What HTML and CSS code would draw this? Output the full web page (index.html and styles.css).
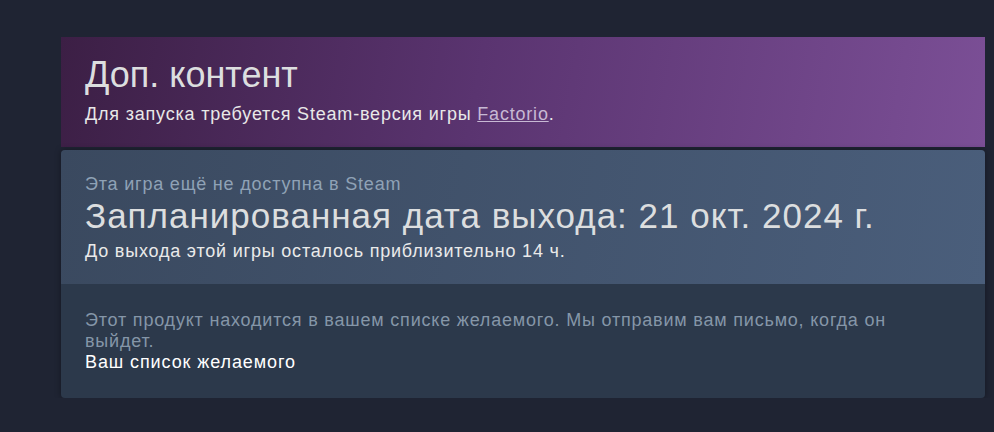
FILE: index.html
```html
<!DOCTYPE html>
<html>
<head>
  <meta charset="utf-8">
  <title>Доп. контент</title>
  <link rel="stylesheet" href="styles.css">
</head>
<body>
  <div class="page">
    <section class="dlc-banner">
      <h1>Доп. контент</h1>
      <p>Для запуска требуется Steam-версия игры <a href="#">Factorio</a>.</p>
    </section>

    <section class="release-box">
      <div class="release-info">
        <div class="not-available">Эта игра ещё не доступна в Steam</div>
        <h2>Запланированная дата выхода: 21 окт. 2024 г.</h2>
        <div class="countdown">До выхода этой игры осталось приблизительно 14 ч.</div>
      </div>
      <div class="wishlist-info">
        <p>Этот продукт находится в вашем списке желаемого. Мы отправим вам письмо, когда он выйдет.</p>
        <a href="#">Ваш список желаемого</a>
      </div>
    </section>
  </div>
</body>
</html>
```

FILE: styles.css
```css
body {
  margin: 0;
  padding: 0;
  background: #1f2433;
  font-family: "Liberation Sans", Arial, sans-serif;
  color: #dcdedf;
}

.page {
  padding: 37px 9px 0 61px;
}

.dlc-banner {
  height: 110px;
  box-sizing: border-box;
  padding: 18px 24px 0 24px;
  background: linear-gradient(100deg, #3c1f45 0%, #5a3470 45%, #7b4f96 100%);
}

.dlc-banner h1 {
  margin: 0;
  font-size: 36px;
  font-weight: normal;
  line-height: 40px;
  color: #dcdedf;
}

.dlc-banner p {
  margin: 8px 0 0 0;
  font-size: 18px;
  line-height: 22px;
  letter-spacing: 0.8px;
  color: #e8e8e8;
}

.dlc-banner a {
  color: #c7b9d4;
  text-decoration: underline;
}

.release-box {
  margin-top: 3px;
  border-radius: 4px;
  overflow: hidden;
  box-shadow: 0 0 6px rgba(0, 0, 0, 0.35);
}

.release-info {
  height: 134px;
  box-sizing: border-box;
  padding: 23px 24px 0 24px;
  background: linear-gradient(100deg, #3a495f 0%, #4a5e7b 100%);
}

.not-available {
  font-size: 18px;
  line-height: 22px;
  letter-spacing: 0.8px;
  color: #8fa2b6;
}

.release-info h2 {
  margin: 1px 0 0 0;
  font-size: 35px;
  font-weight: normal;
  line-height: 40px;
  letter-spacing: 1px;
  color: #dcdedf;
}

.countdown {
  margin-top: 4px;
  font-size: 18px;
  line-height: 22px;
  letter-spacing: 0.8px;
  color: #eaeaea;
}

.wishlist-info {
  height: 114px;
  box-sizing: border-box;
  padding: 26px 40px 0 24px;
  background: #2c394b;
}

.wishlist-info p {
  margin: 0;
  font-size: 18px;
  line-height: 21px;
  letter-spacing: 0.8px;
  color: #8596a8;
}

.wishlist-info a {
  display: block;
  font-size: 18px;
  line-height: 21px;
  letter-spacing: 0.9px;
  color: #ffffff;
  text-decoration: none;
}
```
